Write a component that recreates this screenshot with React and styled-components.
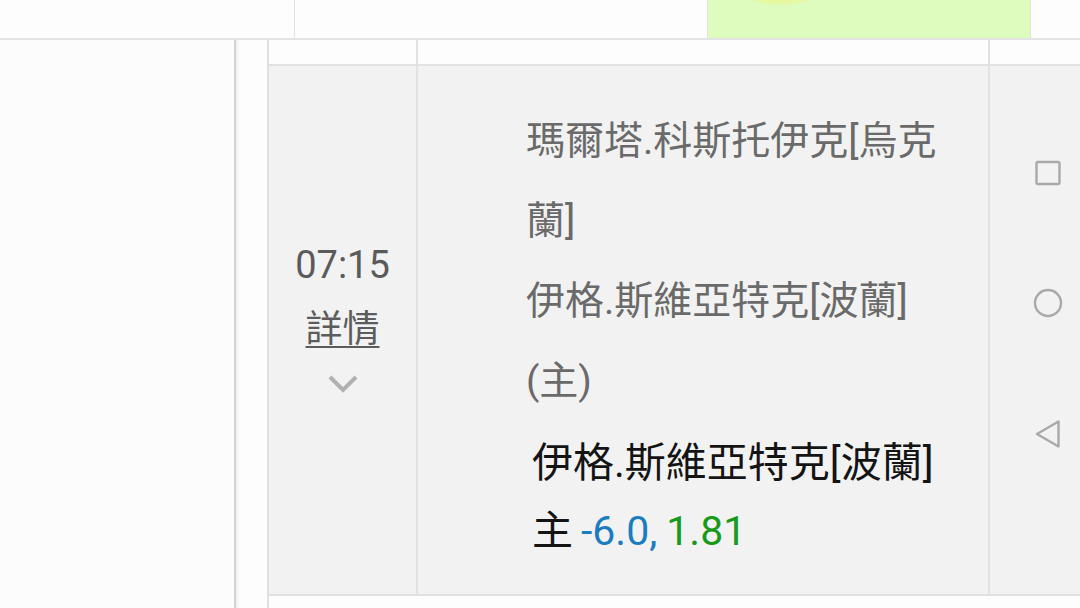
import React from "react";
import styled, { createGlobalStyle } from "styled-components";

const Global = createGlobalStyle`
  html, body {
    margin: 0;
    padding: 0;
    background: #fdfdfd;
    overflow: hidden;
  }
  body {
    font-family: Roboto, "Noto Sans CJK TC", "Noto Sans", sans-serif;
  }
`;

const Page = styled.div`
  position: relative;
  width: 1080px;
  height: 608px;
  display: flex;
  flex-direction: column;
  background: #fdfdfd;
`;

const TopStrip = styled.div`
  display: flex;
  height: 40px;
  flex: none;
  box-sizing: border-box;
  border-bottom: 2px solid #e3e3e3;
  box-shadow: 0 1px 1px rgba(0, 0, 0, 0.03);
`;

const TopCell = styled.div`
  position: relative;
  width: ${p => (p.$w ? `${p.$w}px` : "auto")};
  flex: ${p => (p.$w ? "none" : "1")};
  box-sizing: border-box;
  background: ${p => (p.$green ? "#ddfcbd" : "#fdfdfd")};
  border-right: 1px solid ${p => (p.$edge ? "#e2e2e2" : "transparent")};
  border-left: ${p => (p.$green ? "1px solid #e2e2e2" : "none")};
  overflow: hidden;
`;

// the faint bottom edge of something yellow sitting just above the strip
const Glow = styled.div`
  position: absolute;
  left: 40px;
  top: -12px;
  width: 64px;
  height: 17px;
  border-radius: 50%;
  background: radial-gradient(ellipse at center, #eef58a 0%, #e6f7a0 45%, rgba(221, 252, 189, 0) 100%);
`;

const Body = styled.div`
  flex: 1;
  display: flex;
  min-height: 0;
`;

const SidePanel = styled.div`
  width: 236px;
  flex: none;
  box-sizing: border-box;
  background: #fcfcfc;
  border-right: 2px solid #d3d3d3;
`;

const Gutter = styled.div`
  width: 31px;
  flex: none;
  background: linear-gradient(to right, #f1f1f1 0, #fdfdfd 4px, #fdfdfd 100%);
`;

const Table = styled.div`
  flex: 1;
  display: flex;
  flex-direction: column;
  border-left: 2px solid #e1e1e1;
`;

const Row = styled.div`
  display: grid;
  grid-template-columns: 149px 572px 1fr;
  height: ${p => p.$h}px;
  flex: none;
  box-sizing: border-box;
  background: ${p => (p.$shade ? "#f2f2f2" : "#fdfdfd")};
  border-bottom: 2px solid #e1e1e1;
`;

const Cell = styled.div`
  box-sizing: border-box;
  border-right: ${p => (p.$last ? "none" : "2px solid #e1e1e1")};
`;

const TimeCell = styled(Cell)`
  display: flex;
  flex-direction: column;
  align-items: center;
  padding-top: 175px;
  color: #5a5a5a;
`;

const Time = styled.div`
  font-size: 38px;
  line-height: 48px;
`;

const Detail = styled.a`
  margin-top: 17px;
  font-size: 37px;
  line-height: 48px;
  color: #5c5c5c;
  text-decoration: underline;
  text-decoration-thickness: 2px;
  text-underline-offset: 4px;
`;

const Chevron = styled.svg`
  margin-top: 20px;
  display: block;
`;

const TeamCell = styled(Cell)`
  padding: 35px 30px 0 108px;
`;

const Teams = styled.div`
  font-size: 39px;
  line-height: 80px;
  color: #6a6a6a;
`;

const Pick = styled.div`
  margin-top: 8px;
  padding-left: 6px;
  font-size: 41px;
  line-height: 68px;
  color: #141414;
`;

const Odd = styled.span`
  color: ${p => p.$c};
  margin-left: ${p => p.$gap || 0}px;
`;

const Rest = styled.div`
  flex: 1;
  background: #fdfdfd;
`;

const NavBar = styled.div`
  position: absolute;
  top: 0;
  right: 0;
  width: 64px;
  height: 608px;
  display: flex;
  flex-direction: column;
  align-items: center;
  justify-content: center;
  gap: 101px;
`;

const NavIcon = styled.svg`
  display: block;
  fill: none;
  stroke: #a9a9a9;
  stroke-width: 2.4;
`;

export default function App() {
  return (
    <Page>
      <Global />
      <TopStrip>
        <TopCell $w={295} $edge />
        <TopCell $w={412} />
        <TopCell $w={324} $green $edge>
          <Glow />
        </TopCell>
        <TopCell />
      </TopStrip>
      <Body>
        <SidePanel />
        <Gutter />
        <Table>
          <Row $h={26}>
            <Cell />
            <Cell />
            <Cell $last />
          </Row>
          <Row $h={530} $shade>
            <TimeCell>
              <Time>07:15</Time>
              <Detail>詳情</Detail>
              <Chevron width="32" height="20" viewBox="0 0 32 20">
                <polyline
                  points="3,3 16,16 29,3"
                  fill="none"
                  stroke="#b0b0b0"
                  strokeWidth="4"
                />
              </Chevron>
            </TimeCell>
            <TeamCell>
              <Teams>
                瑪爾塔.科斯托伊克[烏克蘭]
                <br />
                伊格.斯維亞特克[波蘭]
                <br />
                (主)
              </Teams>
              <Pick>
                伊格.斯維亞特克[波蘭]
                <br />
                主<Odd $c="#1a7cc1" $gap={8}>-6.0,</Odd>
                <Odd $c="#179a1a" $gap={9}>1.81</Odd>
              </Pick>
            </TeamCell>
            <Cell $last />
          </Row>
          <Rest />
        </Table>
      </Body>
      <NavBar>
        <NavIcon width="28" height="28" viewBox="0 0 28 28">
          <rect x="2.5" y="3" width="23" height="22" rx="1.5" />
        </NavIcon>
        <NavIcon width="30" height="30" viewBox="0 0 30 30">
          <circle cx="15" cy="15" r="13" />
        </NavIcon>
        <NavIcon width="28" height="30" viewBox="0 0 28 30">
          <path d="M24.5 2.5 L3 15 L24.5 27.5 Z" strokeLinejoin="round" />
        </NavIcon>
      </NavBar>
    </Page>
  );
}
